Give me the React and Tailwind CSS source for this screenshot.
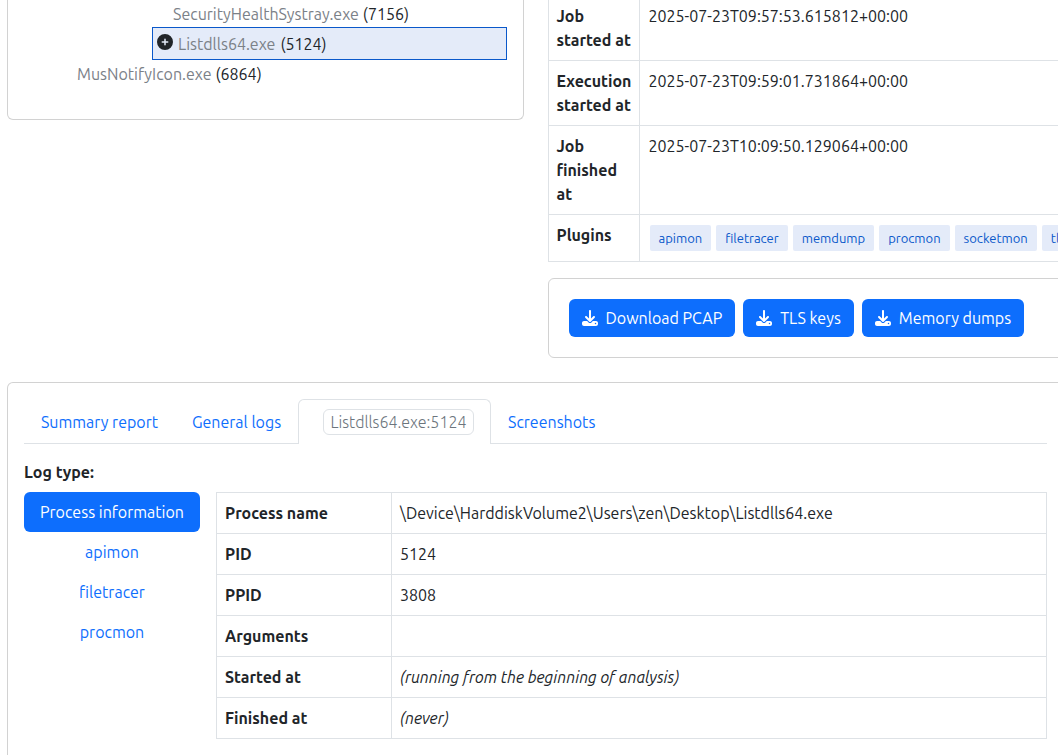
import { useState } from "react";
import { FaCirclePlus, FaDownload } from "react-icons/fa6";

const jobInfo = [
  { label: "Job started at", value: "2025-07-23T09:57:53.615812+00:00" },
  { label: "Execution started at", value: "2025-07-23T09:59:01.731864+00:00" },
  { label: "Job finished at", value: "2025-07-23T10:09:50.129064+00:00" },
];

const plugins = ["apimon", "filetracer", "memdump", "procmon", "socketmon", "tlsmon"];

const downloads = ["Download PCAP", "TLS keys", "Memory dumps"];

const logTypes = ["Process information", "apimon", "filetracer", "procmon"];

const processInfo = [
  { label: "Process name", value: "\\Device\\HarddiskVolume2\\Users\\zen\\Desktop\\Listdlls64.exe" },
  { label: "PID", value: "5124" },
  { label: "PPID", value: "3808" },
  { label: "Arguments", value: "" },
  { label: "Started at", value: <em>(running from the beginning of analysis)</em> },
  { label: "Finished at", value: <em>(never)</em> },
];

function ProcessTree() {
  return (
    <ul className="rounded-b-md border border-t-0 border-[#d2d2d2] px-4 pb-[31px]">
      <li className="flex h-[27px] items-center gap-1 pl-[149px]">
        <a href="#" className="text-[#7b8188]">SecurityHealthSystray.exe</a>
        <span>(7156)</span>
      </li>
      <li className="ml-32 flex h-[33px] items-center gap-[5px] border border-[#0a58ca] bg-[#e4ebf9] px-1">
        <button type="button" aria-label="Expand" className="pb-1">
          <FaCirclePlus className="size-4" />
        </button>
        <a href="#" className="text-[#7b8188]">Listdlls64.exe</a>
        <span>(5124)</span>
      </li>
      <li className="flex h-7 items-center gap-1 pl-[53px]">
        <a href="#" className="text-[#7b8188]">MusNotifyIcon.exe</a>
        <span>(6864)</span>
      </li>
    </ul>
  );
}

function JobTable() {
  return (
    <table className="w-full table-fixed border-collapse border border-t-0 border-[#dee2e6] text-left align-top">
      <tbody>
        {jobInfo.map((row, i) => (
          <tr key={row.label} className="border-b border-[#dee2e6] align-top">
            <th className={`w-[91px] border-r border-[#dee2e6] pr-1 pb-2 pl-2 font-semibold ${i === 0 ? "pt-1" : "pt-2"}`}>
              {row.label}
            </th>
            <td className={`pr-2 pb-2 pl-[9px] ${i === 0 ? "pt-1" : "pt-2"}`}>{row.value}</td>
          </tr>
        ))}
        <tr className="align-top">
          <th className="border-r border-[#dee2e6] p-2 font-semibold">Plugins</th>
          <td className="px-[10px] py-[10px]">
            <div className="flex gap-[5px]">
              {plugins.map((plugin) => (
                <span key={plugin} className="rounded-xs bg-[#e4ebf9] px-[9px] text-[13px] leading-[26px] text-[#0a58ca]">
                  {plugin}
                </span>
              ))}
            </div>
          </td>
        </tr>
      </tbody>
    </table>
  );
}

function ProcessTable() {
  return (
    <table className="grow table-fixed border-collapse text-left">
      <tbody>
        {processInfo.map((row) => (
          <tr key={row.label}>
            <th className="w-[175px] border border-[#dee2e6] p-2 font-semibold">{row.label}</th>
            <td className="border border-[#dee2e6] p-2">{row.value}</td>
          </tr>
        ))}
      </tbody>
    </table>
  );
}

export default function App() {
  const [logType, setLogType] = useState("Process information");

  return (
    <div className="overflow-hidden bg-white font-['Ubuntu','Noto_Sans',sans-serif] text-base leading-6 text-[#212529]">
      <main className="-mr-[6px] ml-[7px]">
        <div className="grid grid-cols-2 items-start gap-6">
          <ProcessTree />
          <div className="min-w-0">
            <JobTable />
            <div className="mt-4 flex gap-2 rounded-md border border-[#d2d2d2] p-5">
              {downloads.map((label) => (
                <button
                  key={label}
                  type="button"
                  className="flex h-[38px] cursor-pointer items-center gap-2 rounded-md bg-[#0d6efd] px-[13px] whitespace-nowrap text-white"
                >
                  <FaDownload className="size-4" />
                  {label}
                </button>
              ))}
            </div>
          </div>
        </div>

        <section className="mt-6 rounded-t-md border border-b-0 border-[#d2d2d2] p-4">
          <nav className="flex h-[45px] border-b border-[#dee2e6] text-[#0d6efd]">
            <a href="#summary" className="flex w-[151px] items-center justify-center pt-0.5">Summary report</a>
            <a href="#logs" className="flex w-[123px] items-center justify-center pt-0.5">General logs</a>
            <a
              href="#process"
              className="-mb-px flex w-[193px] items-center justify-center rounded-t-md border border-b-0 border-[#dee2e6] bg-white pl-2"
            >
              <span className="rounded-md border border-[#dee2e6] px-[7px] font-light text-[#6c757d]">Listdlls64.exe:5124</span>
            </a>
            <a href="#screenshots" className="flex items-center px-[17px] pt-0.5">Screenshots</a>
          </nav>

          <div className="mt-4 mb-2 font-semibold">Log type:</div>
          <div className="flex items-start gap-4">
            <div className="flex w-44 shrink-0 flex-col">
              {logTypes.map((type) => (
                <button
                  key={type}
                  type="button"
                  onClick={() => setLogType(type)}
                  className={`h-10 cursor-pointer rounded-md ${type === logType ? "bg-[#0d6efd] text-white" : "text-[#0d6efd]"}`}
                >
                  {type}
                </button>
              ))}
            </div>
            <ProcessTable />
          </div>
        </section>
      </main>
    </div>
  );
}
